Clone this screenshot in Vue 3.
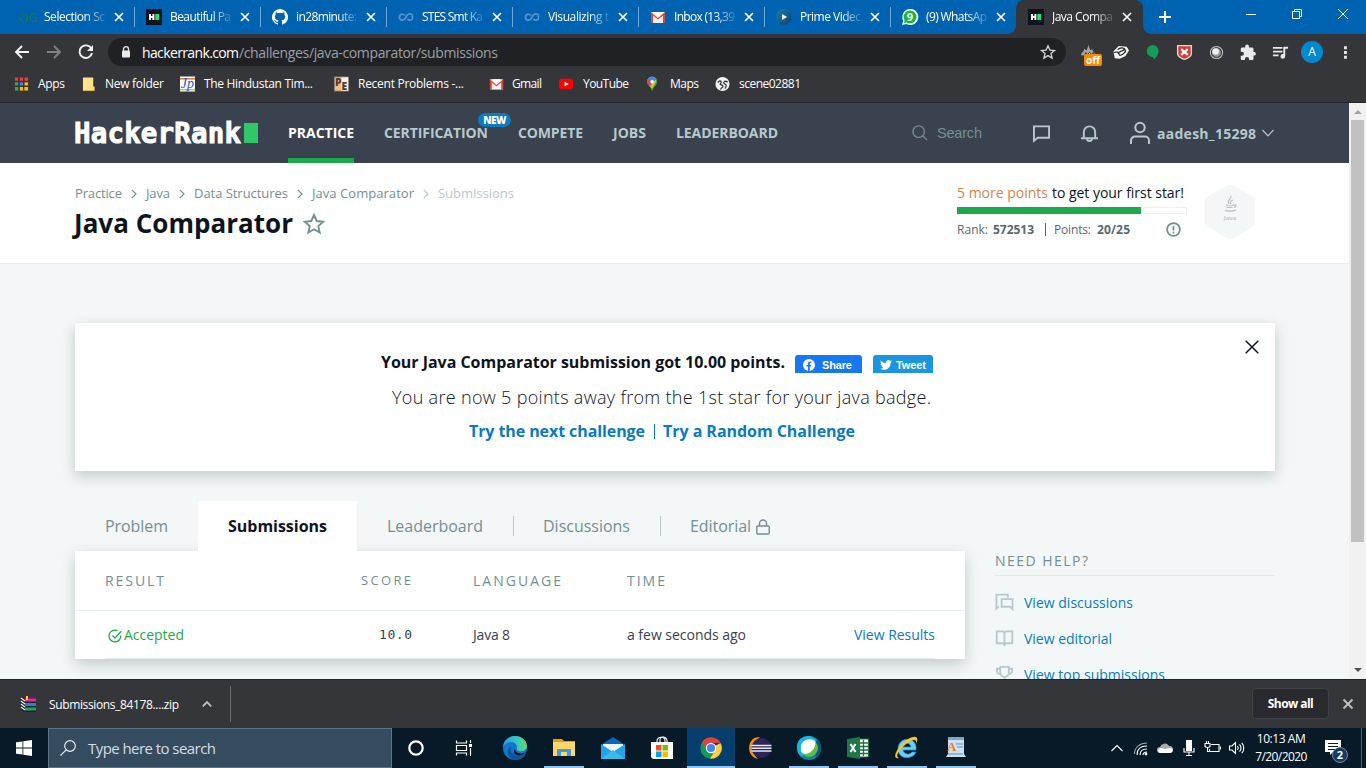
<script setup>
// Spreads a label's letters so that it takes up the given width in pixels.
const vFit = {
  mounted(el, { value }) {
    const range = document.createRange()
    range.selectNodeContents(el)
    const width = range.getBoundingClientRect().width
    const count = el.textContent.trim().length
    el.style.letterSpacing = ((value - width) / Math.max(1, count - 1)).toFixed(3) + 'px'
  }
}

const icons = {
  gfg: '<text x="8" y="13" text-anchor="middle" font-family="Open Sans" font-size="13" font-weight="600" fill="#14735f">ƏG</text>',
  hr: '<rect width="16" height="16" fill="#0e141e"/><path d="M3 5h2v2h1.400V5h2v6h-2V9H5v2H3z" fill="#fff"/><rect x="9.300" y="5" width="3.900" height="6" fill="#1ee564"/>',
  github: '<path fill="#fff" d="M8 0a8 8 0 0 0-2.530 15.590c.4.070.550-.170.550-.380v-1.490c-2.230.480-2.700-.950-2.700-.950-.360-.920-.890-1.170-.890-1.170-.730-.500.050-.490.050-.490.810.060 1.230.830 1.230.830.720 1.230 1.880.870 2.340.670.070-.520.280-.870.510-1.070-1.780-.200-3.640-.890-3.640-3.950 0-.870.310-1.590.820-2.150-.080-.200-.360-1.020.080-2.120 0 0 .670-.220 2.200.820a7.600 7.600 0 0 1 4 0c1.530-1.040 2.200-.820 2.200-.820.440 1.100.160 1.920.080 2.120.510.560.820 1.280.820 2.150 0 3.070-1.870 3.750-3.650 3.950.290.250.540.730.540 1.480v2.190c0 .210.150.460.550.380A8 8 0 0 0 8 0z"/>',
  loop: '<path d="M15 6.200C13.500 4.400 11 4.300 9.300 6L6.800 10c-1.400 1.900-5.300 1.600-5.400-1.600C1.500 5 5.200 4.400 6.900 6.500M9.300 10.200c2 2 5.300.8 5.300-1.800 0-.9-.4-1.500-.9-1.900" fill="none" stroke="#5a91cc" stroke-width="1.700"/>',
  gmail: '<path d="M1 3h14v11H1z" fill="#f1f1f1"/><path d="M1 14V3l7 6 7-6v11h-2V6.500l-5 4-5-4V14z" fill="#d8483c"/><path d="M3 3h10L8 7z" fill="#fff"/>',
  prime: '<defs><linearGradient id="pv" x1="0" y1="0" x2="1" y2="1"><stop offset="0" stop-color="#177fae"/><stop offset="1" stop-color="#123e6b"/></linearGradient></defs><circle cx="8" cy="8" r="8" fill="url(#pv)"/><path d="M6 5l5 3-5 3z" fill="#fff"/>',
  whatsapp: '<path d="M0 16l1.300-4.200A8 8 0 1 1 4.500 15z" fill="#fff"/><circle cx="8" cy="8" r="6.500" fill="#10b83b"/><path d="M1.700 14.300l1-3 2 2z" fill="#10b83b"/><text x="8" y="12" text-anchor="middle" font-family="Open Sans" font-weight="700" font-size="11" fill="#fff">9</text>',
  apps: '<path d="M1 1h4v4H1zM6 1h4v4H6zM11 1h4v4h-4z" fill="#ea4335"/><path d="M1 6h4v4H1z" fill="#34a853"/><path d="M6 6h4v4H6z" fill="#4285f4"/><path d="M11 6h4v4h-4z" fill="#fbbc05"/><path d="M1 11h4v4H1z" fill="#34a853"/><path d="M6 11h9v4H6z" fill="#fbbc05"/><path d="M5.300 1v14M10.300 1v14M1 5.300h14M1 10.300h14" stroke="#35363a" stroke-width="1.400"/>',
  folder: '<path d="M1 1h11v10h1v4H1z" fill="#ffe28a"/><path d="M12 11h1v4H1" fill="none" stroke="#e6bb3d"/>',
  hindustan: '<path d="M0 0h16v16H0z" fill="#fff"/><path d="M0 2.500h16" stroke="#e6692c" stroke-width="1.500"/><path d="M0 14h16" stroke="#a8c95c" stroke-width="1.500"/><text x="8" y="12" text-anchor="middle" font-family="Liberation Serif" font-style="italic" font-size="15" fill="#1f62ad">Jp</text>',
  euler: '<path d="M.5.5h15v15H.5z" fill="#f3bd87" stroke="#8f8178"/><path d="M8 1h7v14H8z" fill="#fff1e3"/><text x="1" y="10" font-family="Open Sans" font-weight="800" font-size="11" fill="#543d36">P</text><text x="8" y="14.500" font-family="Open Sans" font-weight="800" font-size="11" fill="#543d36">E</text>',
  youtube: '<rect x="0" y="2.500" width="15" height="11" rx="3" fill="#f00"/><path d="M6 5.500l4.500 2.500L6 10.500z" fill="#fff"/>',
  maps: '<path d="M5.500 0A5.500 5.500 0 0 0 0 5.700C0 9.500 4.300 10.500 5.500 16c1.200-5.500 5.500-6.500 5.500-10.300A5.500 5.500 0 0 0 5.500 0z" fill="#34a853"/><path d="M5.500 0a5.500 5.500 0 0 1 4.700 2.700L3 10.500C1.500 9 0 7.800 0 5.700A5.500 5.500 0 0 1 5.500 0z" fill="#4285f4"/><path d="M1.200 2.300L5 5.700 2 9.300C.3 7.400-.8 5 1.200 2.300z" fill="#ea4335"/><path d="M3.200 10.500l6-7c1.200 1.500-.4 4-3.700 9.500z" fill="#fbbc05"/><circle cx="5.500" cy="5.500" r="1.900" fill="#fff"/>',
  globe: '<circle cx="8" cy="8" r="7.500" fill="#f1f3f4"/><path d="M3 6.500C5 3 8 5.500 6 7.500s3 1 2.500 3-2 1-2.500 3.500M13.500 6C10 3.500 8 7 10.500 8s1.500 3 0 5" fill="none" stroke="#35363a" stroke-width="1.400"/>',
  fire: '<path d="M1 12C2 8 4 9 4.500 5L7 7 9 1l2 6 2-2c0 4 3 3 4 8z" fill="#a5a5a5"/><path d="M5 12l1-3 2 2 2-2 2 2 2-2 1 4" fill="#fff" stroke="#222" stroke-width="1"/>',
  camera: '<path d="M1.500 8L7 2l8.500 1L18 7l-4 6-6 2.500-5-.500z" fill="#f4f4f4"/><path d="M2 9c3-1 5-1 6 3M6 6c3-3 7-2 8 0s-2 6-6 6M7 9l6-3" stroke="#222" stroke-width="1.300" fill="none"/>',
  balloon: '<path d="M9 1a6.500 6.500 0 0 1 6.500 6.500c0 3-2 6-5 9l-.5-2.500A6.500 6.500 0 1 1 9 1z" fill="#129d58"/>',
  shield: '<path d="M1 1h16v9c0 4-5 6-8 7-3-1-8-3-8-7z" fill="#d9d9d9"/><path d="M2.500 2.500h13V10c0 3-4 4.500-6.500 5.500C6.500 14.500 2.500 13 2.500 10z" fill="#d93a34"/><path d="M5.500 5.500l7 6m0-6l-7 6" stroke="#fff" stroke-width="2.400"/>',
  orb: '<circle cx="9" cy="9" r="7" fill="#c4c4c4"/><circle cx="9" cy="9" r="5.300" fill="#999" stroke="#444" stroke-width="1.300"/><circle cx="8" cy="8" r="3.500" fill="#eee"/>',
  puzzle: '<path fill="#e8eaed" d="M15.500 8.500h-1.200V5.200c0-.9-.7-1.600-1.600-1.600H9.500V2.500a2 2 0 0 0-4 0v1.100H2.300c-.8 0-1.500.7-1.500 1.600v3H2a2.100 2.100 0 0 1 0 4.300H.8v3c0 .9.700 1.500 1.500 1.500h3v-1.200a2.100 2.100 0 0 1 4.300 0V17h3.100c.9 0 1.600-.7 1.600-1.500v-3.200h1.200a2 2 0 0 0 0-3.800z"/>',
  playlist: '<path d="M1 4h10M1 8h10M1 12h6" stroke="#e8eaed" stroke-width="1.800"/><path d="M12 3h5v2h-3v8a2.500 2.500 0 1 1-2-2.400z" fill="#e8eaed"/>',
  rar: '<path d="M1 1l12-1 3 3v13H4l-3-2z" fill="#23202c"/><path d="M1 1l12-1 3 2H5z" fill="#7b1752"/><path d="M5 2.500h11v3H5z" fill="#e12f94"/><path d="M5 7h11v3H5z" fill="#2088c9"/><path d="M5 11.500h11v3H5z" fill="#20a664"/><path d="M1 2l4 3M1 5l4 3M1 8l4 3M1 11l4 3" stroke="#eee" stroke-width="1.200"/><path d="M7 0v4" stroke="#ffc52e" stroke-width="2"/>',
  edge: '<defs><linearGradient id="eg" x1="0" x2="1"><stop offset="0" stop-color="#249fd9"/><stop offset=".6" stop-color="#36cbc4"/><stop offset="1" stop-color="#62dc57"/></linearGradient></defs><circle cx="12" cy="12" r="12" fill="#1176ce"/><path d="M0 11C1 3 7 0 12 0c7 0 12 5 12 10 0 4-4 6-8 5-3-.8-2-2-2-4 0-3-3-5-6-5-4 0-7 3-8 5z" fill="url(#eg)"/><path d="M8 10c-2 7 4 12 13 9 .7-.3 1 .2.700.700A12 12 0 0 1 12 24C4 23 3 13 8 10z" fill="#0b569f"/><path d="M12 13c0 4 6 6 11 3-2 3-7 5-11 2-2-1.500-1-4 0-5z" fill="#081a28"/>',
  explorer: '<path d="M1 3h9l2 2h11v4H1z" fill="#e69b12"/><path d="M1 6h22v14H1z" fill="#ffd767"/><path d="M5 13h14v7h-4v-4H9v4H5z" fill="#3b9ce0"/>',
  mail: '<path d="M0 9L12 1l12 8v14H0z" fill="#0869b8"/><path d="M2 8h20v7H2z" fill="#f2f5f8"/><path d="M0 8l12 8 12-8v15H0z" fill="#22a5e8"/><path d="M0 23L12 14l12 9z" fill="#3bb9ef"/>',
  store: '<path d="M7 8V5c0-5 8-5 8 0v3M10 8V4c0-5 7-3 7 1v3" fill="none" stroke="#e8eaed" stroke-width="1.200"/><path d="M1 6h22v17H3l-2-2z" fill="#fff"/><path d="M6 9h5.500v5.500H6z" fill="#f25022"/><path d="M12.500 9H18v5.500h-5.500z" fill="#7fba00"/><path d="M6 15.500h5.500V21H6z" fill="#00a4ef"/><path d="M12.500 15.500H18V21h-5.500z" fill="#ffb900"/>',
  chrome: '<path d="M12 12L3.200 6.200A10.700 10.700 0 0 1 21.500 7H12z" fill="#db4437"/><path d="M12 12l9.500-5A10.700 10.700 0 0 1 11 22.700z" fill="#ffcd40"/><path d="M12 12l3 4-4 6.700A10.700 10.700 0 0 1 3.200 6.200z" fill="#0f9d58"/><path d="M3.200 6.200A10.700 10.700 0 0 1 21.500 7H12l-4 7z" fill="#db4437"/><circle cx="12" cy="12" r="5.200" fill="#fff"/><circle cx="12" cy="12" r="4.100" fill="#4285f4"/>',
  eclipse: '<path d="M12 1.500C0-1 -4 20 10 23 3 17 4 6 12 1.500z" fill="#f4901e"/><circle cx="13.500" cy="12" r="10" fill="#2d2358"/><path d="M3.500 9.500h20M3.500 12.200h20M3.500 15h20" stroke="#e9e7f3" stroke-width="1.600"/>',
  webex: '<circle cx="12" cy="12" r="12" fill="#0786a7"/><path d="M12 0a12 12 0 0 1 8 21L12 12z" fill="#075a7d"/><circle cx="12" cy="12" r="9" fill="#63bd45"/><path d="M3 3A12 12 0 0 1 20 4L5 21A12 12 0 0 1 3 3z" fill="#16b4df"/><path d="M4.500 16C1 6 11 0 18 5c2 5-3 12-9 13-2 0-4-1-4.500-2z" fill="#fff"/>',
  excel: '<path d="M12 3h10.500v18H12z" fill="#fff" stroke="#1c7143"/><path d="M13 7h9M13 10.500h9M13 14h9M13 17.500h9M17.500 4v16" stroke="#1c7143" stroke-width="1.300"/><path d="M1 3l13-2v22L1 21z" fill="#1f7647"/><path d="M4.500 8l5 8m0-8l-5 8" stroke="#fff" stroke-width="2"/>',
  ie: '<path d="M21 14H8c1 5 7 5 9 2h4c-3 8-18 8-18-3C3 0 23 0 21 14zM8 11h8c-1-5-7-5-8 0z" fill="#69cff8" stroke="#1c8ed1" stroke-width=".7"/><path d="M4 22C-5 24 4 8 13 3c9-5 11-1 8 5 1-5-2-5-7-2C6 11-1 20 4 22z" fill="#f6c52b"/>',
  wordpad: '<path d="M4 2h16v16l2 3H2l2-3z" fill="#cddff0"/><path d="M4 1h16v3H4z" fill="#78a9d3"/><path d="M12 8h7M13 11h6M4 18h15" stroke="#5c91c0" stroke-width="1.200"/><text x="3" y="15" font-family="Liberation Serif" font-weight="700" font-size="13" fill="#f57921">A</text>'
}

const tabs = [
  { icon: 'gfg', title: 'Selection Sc', w: 61 },
  { icon: 'hr', title: 'Beautiful Pa', w: 61 },
  { icon: 'github', title: 'in28minute:', w: 61 },
  { icon: 'loop', title: 'STES Smt Ka', w: 61 },
  { icon: 'loop', title: 'Visualizing t', w: 61 },
  { icon: 'gmail', title: 'Inbox (13,39', w: 61 },
  { icon: 'prime', title: 'Prime Videc', w: 61 },
  { icon: 'whatsapp', title: '(9) WhatsAp', w: 61 },
  { icon: 'hr', title: 'Java Compa', w: 61, active: true }
]
const bookmarks = [
  { icon: 'apps', text: 'Apps', w: 27 },
  { icon: 'folder', text: 'New folder', w: 59, near: true },
  { icon: 'hindustan', text: 'The Hindustan Tim...', w: 109 },
  { icon: 'euler', text: 'Recent Problems -...', w: 106 },
  { icon: 'gmail', text: 'Gmail', w: 30, near: true },
  { icon: 'youtube', text: 'YouTube', w: 46 },
  { icon: 'maps', text: 'Maps', w: 29, near: true },
  { icon: 'globe', text: 'scene02881', w: 62 }
]
const extensions = ['fire', 'camera', 'balloon', 'shield', 'orb', 'puzzle', 'playlist']
const nav = [
  { text: 'PRACTICE', w: 66, active: true },
  { text: 'CERTIFICATION', w: 104, badge: true },
  { text: 'COMPETE', w: 65 },
  { text: 'JOBS', w: 33 },
  { text: 'LEADERBOARD', w: 102 }
]
const crumbs = [
  { text: 'Practice', w: 47 },
  { text: 'Java', w: 24 },
  { text: 'Data Structures', w: 94 },
  { text: 'Java Comparator', w: 102 },
  { text: 'Submissions', w: 76 }
]
const taskApps = [
  { icon: 'edge' }, { icon: 'explorer', open: true }, { icon: 'mail' }, { icon: 'store' },
  { icon: 'chrome', open: true, active: true }, { icon: 'eclipse' }, { icon: 'webex', open: true },
  { icon: 'excel', open: true }, { icon: 'ie', open: true }, { icon: 'wordpad', open: true }
]
</script>

<template>
  <div class="screen">
    <div class="tabstrip">
      <div v-for="(t, i) in tabs" :key="i" class="tab" :class="{ active: t.active, last: i === 7 }">
        <svg class="fav" viewBox="0 0 16 16" v-html="icons[t.icon]"></svg>
        <div class="tab-title"><span v-fit="t.w">{{ t.title }}</span></div>
        <svg class="tab-x" viewBox="0 0 10 10"><path d="M1 1l8 8M9 1L1 9" /></svg>
      </div>
      <svg class="plus" viewBox="0 0 12 12"><path d="M6 0v12M0 6h12" /></svg>
      <div class="winctl">
        <svg viewBox="0 0 12 12"><path d="M1 6.500h10" /></svg>
        <svg viewBox="0 0 12 12"><path d="M1.500 3.500h7v7h-7zM3.500 3.500v-2h7v7h-2" /></svg>
        <svg viewBox="0 0 12 12"><path d="M1 1l10 10M11 1L1 11" /></svg>
      </div>
    </div>

    <div class="toolbar">
      <svg class="nav-ic" viewBox="0 0 16 16"><path d="M15 8H2M8 2L2 8l6 6" /></svg>
      <svg class="nav-ic dim" viewBox="0 0 16 16"><path d="M1 8h13M8 2l6 6-6 6" /></svg>
      <svg class="nav-ic" viewBox="0 0 16 16"><path d="M13.300 4.500A6.300 6.300 0 1 0 14 9" /><path d="M15 1v6H9z" class="solid" /></svg>
      <div class="omnibox">
        <svg class="lock" viewBox="0 0 10 12"><path d="M2.500 5V3.200a2.500 2.500 0 0 1 5 0V5" fill="none" stroke="#e8eaed" stroke-width="1.300" /><rect x="1" y="4.500" width="8" height="7" rx="1" fill="#e8eaed" /></svg>
        <span v-fit="97" class="host">hackerrank.com</span><span v-fit="259" class="path">/challenges/java-comparator/submissions</span>
        <svg class="star" viewBox="0 0 16 16"><path d="M8 1.800l1.900 4.300 4.600.4-3.500 3 1.100 4.600L8 11.600l-4.100 2.500L5 9.500l-3.500-3 4.600-.4z" /></svg>
      </div>
      <div class="exts">
        <div v-for="e in extensions" :key="e" class="ext">
          <svg viewBox="0 0 18 18" v-html="icons[e]"></svg>
          <span v-if="e === 'fire'" class="off">off</span>
        </div>
        <div class="ext"><span class="avatar">A</span></div>
        <div class="ext"><svg viewBox="0 0 18 18"><path d="M8.500 2.500h3v3h-3zM8.500 7.500h3v3h-3zM8.500 12.500h3v3h-3z" fill="#e8eaed" /></svg></div>
      </div>
    </div>

    <div class="bookmarks">
      <div v-for="b in bookmarks" :key="b.text" class="bm" :class="{ near: b.near }">
        <svg viewBox="0 0 16 16" v-html="icons[b.icon]"></svg><span v-fit="b.w">{{ b.text }}</span>
      </div>
    </div>

    <div class="viewport">
      <div class="page">
        <header class="site-head">
          <div class="logo"><span v-fit="167">HackerRank</span><i></i></div>
          <nav>
            <div v-for="n in nav" :key="n.text" class="nav-item" :class="{ on: n.active }" :style="{ width: n.w + 'px' }">
              <span v-fit="n.w">{{ n.text }}</span>
              <b v-if="n.badge" class="new"><span v-fit="23">NEW</span></b>
            </div>
          </nav>
          <svg class="h-search" viewBox="0 0 18 18"><circle cx="7.500" cy="7.500" r="6.500" /><path d="M12 12l5 5" /></svg>
          <span v-fit="45" class="search-text">Search</span>
          <svg class="h-chat" viewBox="0 0 18 18"><path d="M1 1.500h16v12H5l-4 3.300z" /></svg>
          <svg class="h-bell" viewBox="0 0 20 20"><path d="M1 15h18M4 15V8.500a6 6 0 0 1 12 0V15M7.500 15.500a2.500 2.500 0 0 0 5 0" /></svg>
          <svg class="h-user" viewBox="0 0 20 22"><circle cx="10" cy="5.500" r="4.700" /><path d="M1 22v-3.500a4 4 0 0 1 4-4h10a4 4 0 0 1 4 4V22" /></svg>
          <span v-fit="99" class="user">aadesh_15298</span>
          <svg class="h-chev" viewBox="0 0 12 8"><path d="M.5 1L6 6.800 11.500 1" /></svg>
        </header>

        <section class="title-bar">
          <div class="title-left">
            <div class="crumbs">
              <template v-for="(c, i) in crumbs" :key="c.text">
                <svg v-if="i" viewBox="0 0 6 10" :class="{ faint: i === 4 }"><path d="M.8.8L5 5 .8 9.200" /></svg>
                <span v-fit="c.w" :class="{ faint: i === 4 }" :style="{ width: c.w + 'px' }">{{ c.text }}</span>
              </template>
            </div>
            <div class="h1row">
              <h1 v-fit="219">Java Comparator</h1>
              <svg viewBox="0 0 22 22"><path d="M11 2l2.700 6 6.500.7-4.900 4.400 1.400 6.500L11 16.300l-5.700 3.300 1.400-6.500L1.800 8.700 8.300 8z" /></svg>
            </div>
          </div>
          <div class="progress">
            <div class="goal"><span v-fit="91" class="orange">5 more points</span><span v-fit="132">to get your first star!</span></div>
            <div class="track"><div class="fill"></div></div>
            <div class="rank">
              <span v-fit="31" class="c1">Rank:</span><b v-fit="41" class="c2">572513</b><i></i><span v-fit="37" class="c3">Points:</span><b v-fit="33">20/25</b>
              <svg viewBox="0 0 16 16"><circle cx="8" cy="8" r="6.800" /><path d="M8 4v5M8 10.500v1.800" /></svg>
            </div>
          </div>
          <svg class="hex" viewBox="0 0 50 56">
            <path d="M22 1.500q3-1.700 6 0l19 10.500q3 1.700 3 5v21q0 3.300-3 5L28 54.500q-3 1.700-6 0L3 43q-3-1.700-3-5V17q0-3.300 3-5z" fill="#f3f7f7" />
            <g fill="none" stroke="#bcbfc0" stroke-width="1.200"><path d="M26 12c1 3-5 4-2 8M28 16c-3 1-3 2-2 4M21 21c2 1 6 1 8 0M21.500 23.500h6M29 21c3-1 2 2 0 2.500M20 26c2 1.500 8 1.500 11 0" /></g>
            <text x="25" y="36" text-anchor="middle">Java</text>
          </svg>
        </section>

        <main>
          <section class="banner">
            <div class="line a"><span v-fit="404">Your Java Comparator submission got 10.00 points.</span>
              <div class="share"><svg viewBox="0 0 12 12"><circle cx="6" cy="6" r="6" fill="#fff" /><path d="M5 12V7.500H3.500V6H5V4.700C5 3 6 2.300 8.300 2.600V4C7 3.900 6.700 4.100 6.700 5v1h1.600L8 7.500H6.700V12z" fill="#1877f2" /></svg><b v-fit="30">Share</b></div>
              <div class="tweet"><svg viewBox="0 0 24 24"><path d="M24 4.600a10 10 0 0 1-2.800.8 5 5 0 0 0 2.100-2.700 10 10 0 0 1-3.100 1.200 4.900 4.900 0 0 0-8.400 4.500A14 14 0 0 1 1.700 3.100a4.900 4.900 0 0 0 1.500 6.600 5 5 0 0 1-2.200-.6 4.900 4.900 0 0 0 3.900 4.900 5 5 0 0 1-2.200.1 4.900 4.900 0 0 0 4.600 3.400A10 10 0 0 1 0 19.500a14 14 0 0 0 7.500 2.200c9.100 0 14.300-7.700 14-14.600A10 10 0 0 0 24 4.600z" fill="#fff" /></svg><b v-fit="30">Tweet</b></div>
            </div>
            <div class="line b"><span v-fit="539">You are now 5 points away from the 1st star for your java badge.</span></div>
            <div class="line c"><span v-fit="176">Try the next challenge</span><i></i><span v-fit="192">Try a Random Challenge</span></div>
            <svg class="banner-x" viewBox="0 0 14 14"><path d="M.7.7l12.600 12.600M13.300.7L.7 13.300" /></svg>
          </section>

          <div class="columns">
            <div class="left">
              <div class="tabs">
                <div class="t t1"><span v-fit="63">Problem</span></div>
                <div class="t t2"><span v-fit="99">Submissions</span></div>
                <div class="t t3"><span v-fit="96">Leaderboard</span></div>
                <div class="t t4"><span v-fit="87">Discussions</span></div>
                <div class="t t5"><span v-fit="61">Editorial</span><svg viewBox="0 0 14 16"><rect x=".8" y="7" width="12.400" height="8" rx="1" /><path d="M3.500 7V4.500a3.500 3.500 0 0 1 7 0V7" /></svg></div>
              </div>
              <div class="card">
                <div class="row head"><span v-fit="59">RESULT</span><span v-fit="50" class="mono">SCORE</span><span v-fit="88">LANGUAGE</span><span v-fit="38">TIME</span></div>
                <div class="row body">
                  <span class="ok"><svg viewBox="0 0 14 14"><path d="M12.800 6.500A5.900 5.900 0 1 1 9.500 1.700M4.500 6.500L7 9l6.300-6.800" /></svg><span v-fit="60">Accepted</span></span>
                  <span v-fit="33" class="score">10.0</span><span v-fit="37">Java 8</span><span v-fit="119">a few seconds ago</span><a v-fit="81">View Results</a>
                </div>
              </div>
            </div>
            <aside>
              <h4><span v-fit="93">NEED HELP?</span></h4>
              <div class="help"><svg viewBox="0 0 20 18"><path d="M4 13.500L1.500 16V1.200h12v3M7 6h11.500v10.500L16 14H7z" /></svg><a v-fit="109">View discussions</a></div>
              <div class="help"><svg viewBox="0 0 20 18"><path d="M10 3.500L8.500 2H1.800v12.500h6.700L10 16.500l1.500-2h6.700V2h-6.700L10 3.500v13" /></svg><a v-fit="88">View editorial</a></div>
              <div class="help"><svg viewBox="0 0 20 18"><path d="M5.500 1.500h9v6a4.500 4.500 0 0 1-9 0zM5.500 3.500H2v2.500c0 2 2 3 3.500 3M14.500 3.500H18v2.500c0 2-2 3-3.500 3M10 12v4M6.500 16h7" /></svg><a v-fit="141">View top submissions</a></div>
            </aside>
          </div>
        </main>
      </div>
      <div class="scroll"><svg viewBox="0 0 8 4"><path d="M0 4l4-4 4 4z" fill="#a3a3a3" /></svg><div class="thumb"></div><svg viewBox="0 0 8 4"><path d="M0 0l4 4 4-4z" fill="#505050" /></svg></div>
    </div>

    <div class="downloads">
      <svg class="rar" viewBox="0 0 16 16" v-html="icons.rar"></svg>
      <span v-fit="130">Submissions_84178....zip</span>
      <svg class="up" viewBox="0 0 10 6"><path d="M.8 5.300L5 1l4.200 4.300" /></svg>
      <i></i>
      <div class="showall"><b v-fit="46">Show all</b></div>
      <svg class="dx" viewBox="0 0 10 10"><path d="M.5.5l9 9M9.500.5l-9 9" /></svg>
    </div>

    <div class="taskbar">
      <div class="start"><svg viewBox="0 0 16 16"><path d="M0 2.300L6.500 1.400v6.100H0zM7.300 1.300L16 0v7.500H7.300zM0 8.400h6.500v6.200L0 13.700zM7.300 8.400H16V16l-8.700-1.300z" fill="#fff" /></svg></div>
      <div class="tsearch"><svg viewBox="0 0 16 16"><circle cx="10" cy="6" r="5.300" /><path d="M6.200 9.800L.5 15.500" /></svg><span v-fit="128">Type here to search</span></div>
      <div class="tcell"><svg viewBox="0 0 16 16"><circle cx="8" cy="8" r="6.700" fill="none" stroke="#fff" stroke-width="2.200" /></svg></div>
      <div class="tcell"><svg viewBox="0 0 16 16"><path d="M.5.500V3h10V.5M.5 15.500V13h10v2.500M.5 5.500h10v5H.5zM14.500 0v3M14.500 8v8" fill="none" stroke="#fff" stroke-width="1.200" /><path d="M13 4h3v3h-3z" fill="#fff" /></svg></div>
      <div class="apps">
        <div v-for="a in taskApps" :key="a.icon" class="app" :class="{ open: a.open, active: a.active }"><svg viewBox="0 0 24 24" v-html="icons[a.icon]"></svg></div>
      </div>
      <div class="tray">
        <svg viewBox="0 0 16 16"><path d="M2.500 11L8 5.500l5.500 5.500" /></svg>
        <svg viewBox="0 0 16 16"><path d="M4 15C4 9 8 6 14 6M7 15c0-4 3-6 7-6M10 15c0-2 1.500-3 4-3" /><circle cx="13" cy="14" r="1.400" fill="#fff" stroke="none" /><path d="M1.500 14C1.500 7 7 3 14 3" opacity=".6" /></svg>
        <svg viewBox="0 0 16 16"><path d="M3 13a3 3 0 0 1 0-6 5 5 0 0 1 9-1 3.500 3.500 0 0 1 1 7z" fill="#aaa" stroke="none" /><path d="M3 13c-3-1-2-5 1-5l4 1 5-1c4 0 3 5 0 5z" fill="#fff" stroke="none" /></svg>
        <svg viewBox="0 0 16 16"><rect x="5" y="0" width="6" height="11" fill="#fff" stroke="none" /><path d="M3 8v4h10V8M8 12v3.500M5 15.500h6" /></svg>
        <svg viewBox="0 0 16 16"><path d="M6 4.500h8v7H4.500V9M15.500 6.500v3M0 3.500h5v3q-2.500 2-5 0zM1.500 3V1M3.500 3V1M2.500 7.500v4h2" /></svg>
        <svg viewBox="0 0 16 16"><path d="M.5 6h2.500l3.500-3.500v11L3 10H.500zM8.500 6q1.500 2 0 4M10.500 4.300q3 3.700 0 7.400M12.800 2.800q4 5.200 0 10.400" /></svg>
      </div>
      <div class="clock"><span v-fit="49">10:13 AM</span><span v-fit="52">7/20/2020</span></div>
      <div class="notif"><svg viewBox="0 0 18 18"><path d="M1 1h16v12h-8l-3 3v-3H1z" fill="#fff" /><path d="M4 4.500h10M4 7.500h10M4 10.500h7" stroke="#081a28" /></svg><b>2</b></div>
      <div class="peek"></div>
    </div>
  </div>
</template>

<style>
html, body { margin: 0; overflow: hidden; }
</style>

<style scoped>
* { box-sizing: border-box; }
.screen { width: 1366px; height: 768px; display: flex; flex-direction: column; overflow: hidden; font-family: "Open Sans", "Noto Sans", sans-serif; font-size: 12px; color: #fff; }
span, b, a, h1 { white-space: nowrap; }
svg { display: block; flex: none; overflow: visible; }
i { display: block; flex: none; }

.tabstrip { height: 34px; flex: none; background: #0063b1; display: flex; align-items: center; padding-left: 8px; }
.tab { width: 126px; height: 34px; display: flex; align-items: center; padding-left: 12px; position: relative; flex: none; }
.tab::after { content: ""; position: absolute; right: -1px; top: 7px; height: 20px; width: 1px; background: #71a7d4; }
.tab.last::after { display: none; }
.tab.active { width: 127px; background: #35363a; border-radius: 8px 8px 0 0; }
.tab.active::after { right: -8px; top: 26px; width: 8px; height: 8px; background: radial-gradient(circle at 100% 0, transparent 7.500px, #35363a 8px); }
.tab.active::before { content: ""; position: absolute; left: -8px; top: 26px; width: 8px; height: 8px; background: radial-gradient(circle at 0 0, transparent 7.500px, #35363a 8px); }
.fav { width: 16px; height: 16px; }
.tab-title { margin-left: 8px; width: 62px; line-height: 20px; mask-image: linear-gradient(90deg, #000 66%, transparent 104%); }
.tab-x { width: 10px; height: 10px; margin-left: 8px; stroke: #fff; stroke-width: 1.700; }
.plus { width: 12px; height: 12px; margin-left: 16px; stroke: #fff; stroke-width: 2; }
.winctl { margin-left: auto; display: flex; gap: 34px; padding: 0 17px 6px 0; }
.winctl svg { width: 12px; height: 12px; fill: none; stroke: #fff; stroke-width: 1; }

.toolbar { height: 36px; flex: none; background: #35363a; display: flex; align-items: center; padding-left: 14px; }
.nav-ic { width: 16px; height: 16px; margin-right: 16px; fill: none; stroke: #f1f3f4; stroke-width: 1.900; }
.nav-ic.dim { stroke: #818286; }
.nav-ic .solid { fill: #f1f3f4; stroke: none; }
.omnibox { width: 958px; height: 28px; margin-left: -2px; border-radius: 14px; background: #202124; display: flex; align-items: center; padding: 0 10px 0 13px; font-size: 14px; }
.lock { width: 10px; height: 12px; margin-right: 11px; }
.host { width: 97px; }
.path { color: #9aa0a6; }
.star { width: 16px; height: 16px; margin-left: auto; fill: none; stroke: #d3d5d8; stroke-width: 1.300; }
.exts { display: flex; margin-left: 6px; }
.ext { width: 32px; display: flex; justify-content: center; align-items: center; position: relative; }
.ext svg { width: 17px; height: 17px; }
.off { position: absolute; left: 12px; top: 13px; width: 18px; height: 12px; border-radius: 2px; background: #ff8a00; font-size: 10px; font-weight: 700; line-height: 12px; text-align: center; }
.avatar { width: 22px; height: 22px; border-radius: 50%; background: #0288d1; text-align: center; line-height: 22px; font-size: 12px; }

.bookmarks { height: 33px; flex: none; background: #35363a; border-bottom: 1px solid #242528; display: grid; grid-template-columns: 68px 98px 154px 155px 70px 88px 68px 120px; padding: 0 0 5px 14px; align-items: center; }
.bm { display: flex; align-items: center; }
.bm svg { width: 15px; height: 16px; margin-right: 9px; }
.bm.near svg { margin-right: 8px; }

.viewport { height: 576px; flex: none; display: flex; overflow: hidden; background: #f3f7f7; }
.page { width: 1349px; flex: none; }
.site-head { height: 60px; background: #39424e; display: flex; align-items: center; padding-left: 75px; color: #b7c9cc; }
.logo { display: flex; align-items: center; width: 213px; flex: none; color: #fff; font: 700 27.500px/30px "DejaVu Sans Mono", monospace; }
.logo span { width: 167px; margin-left: -1px; -webkit-text-stroke: .9px #fff; }
.logo i { width: 14px; height: 20px; margin-left: 3px; background: #2ec866; }
nav { display: flex; gap: 30px; width: 624px; flex: none; }
.nav-item { height: 60px; line-height: 60px; font-size: 14px; font-weight: 700; position: relative; flex: none; }
.nav-item.on { color: #fff; box-shadow: inset 0 -5px #1ba94c; }
.new { position: absolute; left: 94px; top: 10px; width: 33px; height: 14px; border-radius: 7px; background: #097bbf; color: #fff; font-size: 10px; line-height: 14px; text-align: center; }
.h-search { width: 16px; height: 16px; stroke: #738f93; fill: none; stroke-width: 1.500; }
.search-text { width: 46px; margin: 0 50px 0 9px; font: 14.500px "Liberation Sans", sans-serif; color: #738f93; }
.h-chat, .h-bell, .h-user, .h-chev { fill: none; stroke: #b7c9cc; stroke-width: 2; }
.h-chat { width: 17px; height: 17px; }
.h-bell { width: 19px; height: 19px; margin-left: 30px; }
.h-user { width: 20px; height: 22px; margin-left: 31px; }
.user { width: 99px; margin: 0 6px 0 7px; font-size: 14px; font-weight: 700; }
.h-chev { width: 12px; height: 8px; stroke-width: 1.200; }

.title-bar { height: 101px; background: #fff; border-bottom: 1px solid #e7eeef; display: flex; padding-left: 75px; color: #0e141e; }
.title-left { width: 882px; }
.crumbs { display: flex; align-items: center; height: 20px; margin-top: 20px; font-size: 13px; color: #738f93; }
.crumbs svg { width: 6px; height: 10px; margin: 1px 9px 0 9px; fill: none; stroke: #738f93; stroke-width: 1.200; }
.crumbs span { flex: none; }
.crumbs .faint { color: #b7c9cc; stroke: #b7c9cc; }
.h1row { display: flex; align-items: center; height: 40px; }
h1 { margin: 0 0 0 -1px; width: 229px; font-size: 26px; font-weight: 700; line-height: 40px; }
.h1row svg { width: 22px; height: 22px; margin-top: 2px; fill: none; stroke: #738f93; stroke-width: 1.900; }
.progress { width: 230px; flex: none; padding-top: 20px; }
.goal { height: 20px; line-height: 20px; font-size: 14px; display: flex; }
.orange { width: 95px; color: #d1864b; }
.track { height: 7px; margin-top: 4px; border: 1px solid #f0f0f0; }
.fill { width: 184px; height: 7px; margin: -1px; background: #1ba94c; }
.rank { height: 20px; margin-top: 5px; display: flex; align-items: center; font-size: 12px; color: #576871; }
.rank .c1 { width: 36px; }
.rank .c2 { width: 41px; }
.rank i { width: 1px; height: 13px; margin: 0 8px 0 11px; background: #576871; }
.rank .c3 { width: 43px; }
.rank svg { width: 15px; height: 15px; margin: 0 6px 0 auto; fill: none; stroke: #738f93; stroke-width: 1.900; }
.hex { width: 50px; height: 56px; margin: 21px 0 0 18px; }
.hex text { font: 700 6px "Open Sans", sans-serif; fill: #c4c7c8; }

main { padding: 59px 74px 0 75px; }
.banner { height: 148px; background: #fff; box-shadow: 0 5px 14px rgba(0, 20, 20, .2); position: relative; padding-top: 26px; color: #0e141e; }
.line { display: flex; align-items: center; }
.a { height: 26px; padding-left: 306px; font-size: 16px; font-weight: 700; }
.a > span { width: 414px; flex: none; }
.share, .tweet { height: 18px; margin-top: 4px; display: flex; align-items: center; border-radius: 3px 3px 0 0; font: 700 11px "Liberation Sans", sans-serif; color: #fff; padding-top: 2px; }
.share { width: 67px; background: #1877f2; padding-left: 8px; gap: 7px; }
.tweet { width: 60px; background: #1b95e0; padding-left: 7px; gap: 4px; margin-left: 11px; }
.share svg, .tweet svg { width: 12px; height: 12px; }
.b { height: 44px; padding-left: 317px; font-size: 18px; font-weight: 300; color: #0e141e; }
.c { height: 24px; padding-left: 394px; font-size: 16px; font-weight: 700; color: #097bbf; }
.c span { width: 176px; }
.c i { width: 1px; height: 15px; margin: 0 8px 0 9px; background: #097bbf; }
.banner-x { position: absolute; right: 16px; top: 17px; width: 14px; height: 14px; stroke: #0e141e; stroke-width: 1.500; }
.columns { display: flex; margin-top: 30px; }
.left { width: 890px; margin-right: 30px; flex: none; }
.tabs { display: flex; height: 50px; line-height: 50px; font-size: 16px; color: #738f93; position: relative; z-index: 1; }
.t { padding-left: 30px; position: relative; flex: none; display: flex; align-items: center; }
.t1 { width: 123px; }
.t2 { width: 159px; background: #fff; color: #0e141e; font-weight: 700; }
.t3 { width: 156px; }
.t4 { width: 147px; }
.t4::before, .t5::before { content: ""; position: absolute; left: 0; top: 15px; width: 1px; height: 20px; background: #b7c9cc; }
.t5 svg { width: 14px; height: 16px; margin: 2px 0 0 5px; fill: none; stroke: #738f93; stroke-width: 1.400; }
.card { height: 108px; background: #fff; box-shadow: 0 5px 14px rgba(0, 20, 20, .2); }
.row { display: grid; grid-template-columns: 255px 113px 154px 227px 81px; padding-left: 30px; font-size: 14px; }
.head { height: 60px; line-height: 59px; border-bottom: 1px solid #e7eeef; color: #738f93; }
.mono { padding-left: 1px; font-size: 13px; }
.body { height: 48px; line-height: 48px; margin: 0 30px; padding: 0; border-bottom: 1px solid #e7eeef; color: #39424e; }
.score { padding-left: 19px; font-family: "DejaVu Sans Mono", monospace; font-size: 13px; }
.ok { display: flex; align-items: center; color: #1ba94c; }
.ok svg { width: 14px; height: 14px; margin: 2px 2px 0 3px; fill: none; stroke: #1ba94c; stroke-width: 1.300; }
.body a { color: #097bbf; }
aside { width: 280px; }
h4 { height: 25px; margin: 50px 0 8px; border-bottom: 1px solid #e1e8e9; font-size: 14px; font-weight: 400; line-height: 20px; color: #738f93; }
.help { height: 36px; display: flex; align-items: center; font-size: 14px; color: #097bbf; }
.help svg { width: 19px; height: 18px; margin-right: 10px; fill: none; stroke: #b7c9cc; stroke-width: 1.900; }
.scroll { width: 17px; background: #f1f1f1; display: flex; flex-direction: column; align-items: center; }
.scroll svg { width: 8px; height: 4px; margin-top: 7px; }
.thumb { width: 13px; height: 422px; margin: 6px 0 119px; background: #c1c1c1; }

.downloads { height: 49px; flex: none; background: #35363a; border-top: 1px solid #242528; display: flex; align-items: center; padding-left: 20px; }
.rar { width: 16px; height: 16px; }
.downloads span { width: 130px; margin: 0 23px 0 13px; }
.up { width: 10px; height: 6px; fill: none; stroke: #bdc1c6; stroke-width: 1.800; }
.downloads i { width: 1px; height: 36px; margin-left: 18px; background: #6a6b6e; }
.showall { width: 77px; height: 31px; margin-left: auto; border: 1px solid #414246; border-radius: 4px; background: #292a2d; display: flex; align-items: center; justify-content: center; margin-top: -2px; }
.dx { width: 10px; height: 10px; margin: 0 13px 0 14px; stroke: #bdc1c6; stroke-width: 1.900; }

.taskbar { height: 40px; flex: none; background: #081a28; display: flex; align-items: center; }
.start { width: 48px; padding-left: 16px; }
.start svg { width: 16px; height: 16px; }
.tsearch { width: 344px; height: 40px; background: #354c60; border: 1px solid #5f7484; display: flex; align-items: center; padding-left: 11px; font-size: 15px; color: #d6dce1; }
.tsearch svg { width: 16px; height: 16px; margin: 0 12px 0 0; fill: none; stroke: #e8ecef; stroke-width: 1.200; }
.tcell { width: 48px; display: flex; justify-content: center; }
.tcell svg { width: 16px; height: 16px; }
.apps { display: flex; margin-left: 3px; gap: 1px; }
.app { width: 48px; height: 40px; display: flex; justify-content: center; align-items: center; position: relative; }
.app svg { width: 24px; height: 24px; }
.app.open::after { content: ""; position: absolute; left: 4px; right: 4px; bottom: 0; height: 2px; background: #8ec5f0; }
.app.active { background: #063e6e; }
.app.active::after { left: 0; right: 0; }
.tray { display: flex; gap: 8px; margin-left: 129px; }
.tray svg { width: 16px; height: 16px; fill: none; stroke: #fff; stroke-width: 1.100; }
.clock { width: 60px; margin-left: 6px; height: 40px; padding-top: 2px; line-height: 18px; display: flex; flex-direction: column; align-items: center; }
.notif { position: relative; margin-left: 13px; }
.notif svg { width: 18px; height: 18px; }
.notif b { position: absolute; left: 8px; top: 8px; width: 16px; height: 16px; border-radius: 50%; background: #143a60; border: 1px solid #6c8ba7; line-height: 14px; text-align: center; font-size: 11px; }
.peek { margin: 0 4px 0 auto; width: 1px; height: 40px; background: #56636e; }
</style>
